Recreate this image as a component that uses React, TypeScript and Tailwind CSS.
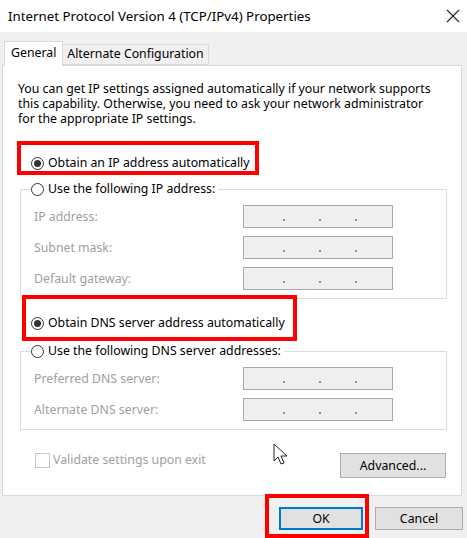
const font = { fontFamily: '"Noto Sans", "Open Sans", sans-serif' }

function Radio({ checked }: { checked?: boolean }) {
  return (
    <span className="w-[13px] h-[13px] rounded-full border border-[#333] bg-white flex items-center justify-center shrink-0">
      {checked && <span className="w-[7px] h-[7px] rounded-full bg-[#333]"></span>}
    </span>
  )
}

function IpBox() {
  return (
    <div className="w-[150px] h-[23px] border border-[#a9a9a9] bg-[#f0f0f0] relative">
      <span className="absolute left-[39px] top-[13px] w-[2px] h-[2px] bg-[#8c8c9c]"></span>
      <span className="absolute left-[75px] top-[13px] w-[2px] h-[2px] bg-[#8c8c9c]"></span>
      <span className="absolute left-[111px] top-[13px] w-[2px] h-[2px] bg-[#8c8c9c]"></span>
    </div>
  )
}

function Field({ label }: { label: string }) {
  return (
    <div className="flex items-center h-[23px]">
      <span className="w-[222px] shrink-0 pl-[13px] text-[#a0a0a0]">{label}</span>
      <IpBox />
    </div>
  )
}

function Group({ legend, fields }: { legend: string; fields: string[] }) {
  return (
    <fieldset className="ml-[17px] w-[427px] border border-[#dcdcdc] pt-[8px] pb-[8px]">
      <legend className="ml-[10px] pr-[3px] flex items-center gap-[4px] h-[16px] bg-white">
        <Radio />
        <span>{legend}</span>
      </legend>
      <div className="flex flex-col gap-[8px]">
        {fields.map((f) => (
          <Field key={f} label={f} />
        ))}
      </div>
    </fieldset>
  )
}

const intro = [
  'You can get IP settings assigned automatically if your network supports',
  'this capability. Otherwise, you need to ask your network administrator',
  'for the appropriate IP settings.',
]

export default function App() {
  return (
    <div className="w-[467px] h-[538px] bg-[#f0f0f0] relative overflow-hidden text-[12.3px] leading-[16px] text-black" style={font}>
      <div className="h-[32px] bg-white flex items-center justify-between pl-[8px] pr-[6px]">
        <span className="text-[13.3px]">Internet Protocol Version 4 (TCP/IPv4) Properties</span>
        <svg width="14" height="14" viewBox="0 0 14 14" className="mr-[1px]">
          <path d="M1 1L13 13M13 1L1 13" stroke="#222" strokeWidth="1.1" />
        </svg>
      </div>

      <div className="flex items-start pl-[4px] mt-[9px] h-[25px] relative z-10">
        <div className="h-[25px] px-[6px] pt-[3px] bg-white border border-b-0 border-[#d9d9d9]">General</div>
        <div className="h-[21px] mt-[3px] px-[4px] pt-[1px] bg-[#f0f0f0] border border-l-0 border-[#d9d9d9]">
          Alternate Configuration
        </div>
      </div>

      <div className="-mt-[1px] ml-[2px] w-[460px] h-[431px] bg-white border border-[#d9d9d9] flex flex-col">
        <div className="ml-[15px] mt-[15px] flex flex-col">
          {intro.map((line) => (
            <span key={line} className="h-[15px] leading-[15px] whitespace-nowrap">
              {line}
            </span>
          ))}
        </div>

        <div className="ml-[28px] mt-[29px] flex items-center gap-[4px] h-[16px]">
          <Radio checked />
          <span>Obtain an IP address automatically</span>
        </div>

        <div className="mt-[10px]">
          <Group legend="Use the following IP address:" fields={['IP address:', 'Subnet mask:', 'Default gateway:']} />
        </div>

        <div className="ml-[28px] mt-[16px] flex items-center gap-[4px] h-[16px]">
          <Radio checked />
          <span>Obtain DNS server address automatically</span>
        </div>

        <div className="mt-[12px]">
          <Group legend="Use the following DNS server addresses:" fields={['Preferred DNS server:', 'Alternate DNS server:']} />
        </div>

        <div className="mt-[22px] flex items-start justify-between">
          <div className="ml-[32px] flex items-center gap-[3px] text-[#a0a0a0]">
            <span className="w-[15px] h-[15px] border border-[#c8c8c8] bg-white"></span>
            <span>Validate settings upon exit</span>
          </div>
          <button className="mr-[15px] mt-[1px] w-[106px] h-[25px] bg-[#e1e1e1] border border-[#adadad]">Advanced...</button>
        </div>
      </div>

      <div className="mt-[11px] flex justify-end gap-[12px] pr-[4px]">
        <button className="w-[84px] h-[23px] bg-[#e1e1e1] border-2 border-[#0078d7]">OK</button>
        <button className="w-[88px] h-[23px] bg-[#e1e1e1] border border-[#adadad]">Cancel</button>
      </div>

      <svg className="absolute left-[273px] top-[443px]" width="16" height="24" viewBox="0 0 16 24">
        <path d="M1 1V18L5 14L8 21L11 20L8 13H14Z" fill="white" stroke="#222" strokeWidth="1" strokeLinejoin="round" />
      </svg>

      <div className="absolute left-[17px] top-[141px] w-[242px] h-[34px] border-4 border-[#ff0000]"></div>
      <div className="absolute left-[22px] top-[295px] w-[275px] h-[46px] border-4 border-[#ff0000]"></div>
      <div className="absolute left-[265px] top-[494px] w-[104px] h-[44px] border-4 border-[#ff0000]"></div>
    </div>
  )
}
